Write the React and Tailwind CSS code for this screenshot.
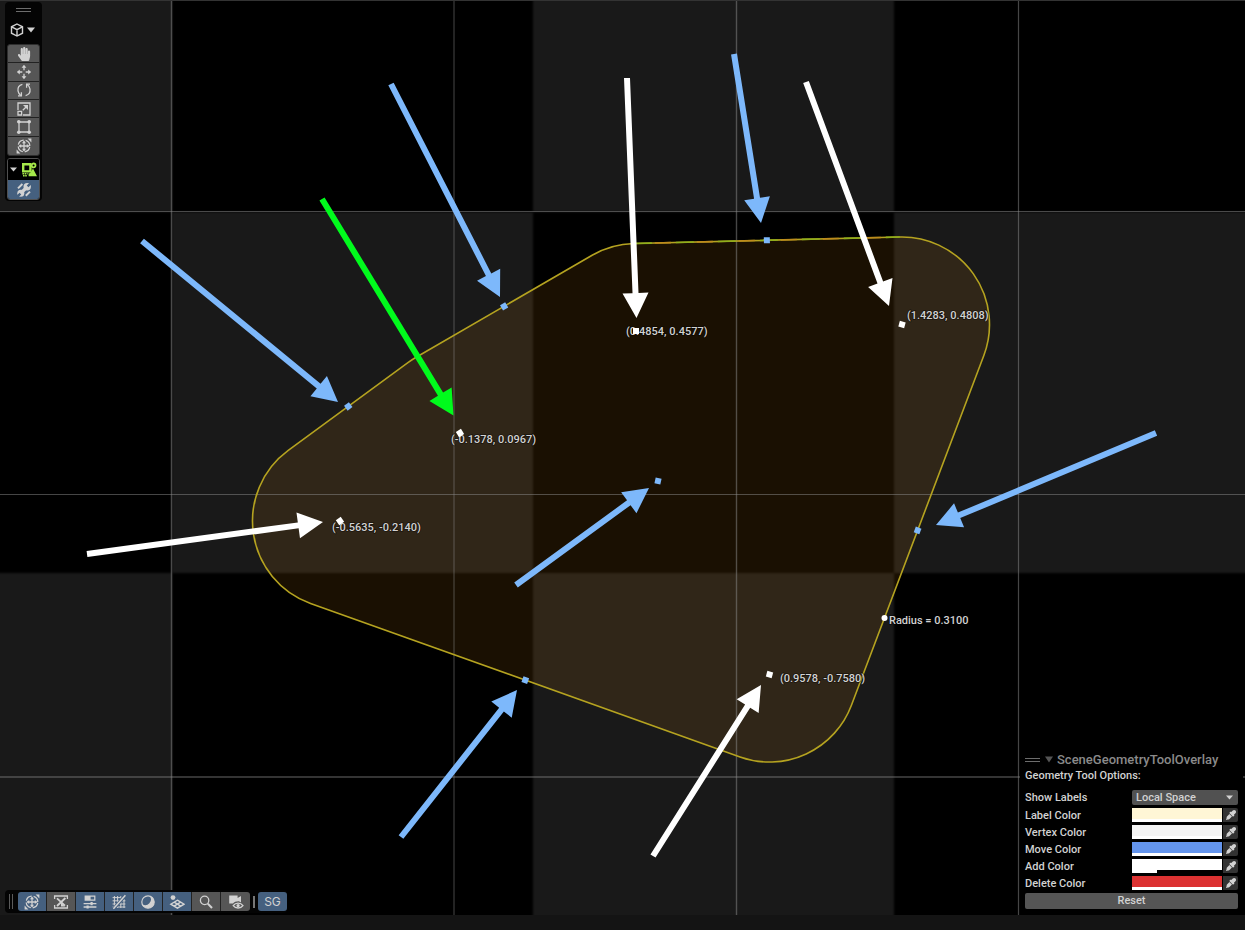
import React from "react";
import { FaEyeDropper, FaHandPaper } from "react-icons/fa";

const RADIUS = 87.5;
const VERTICES = [
  { x: 340, y: 521, label: "(-0.5635, -0.2140)", lx: 332, ly: 531, angle: 55 },
  { x: 460, y: 433, label: "(-0.1378, 0.0967)", lx: 451, ly: 443, angle: 58 },
  { x: 636, y: 331, label: "(0.4854, 0.4577)", lx: 626, ly: 335, angle: 0 },
  { x: 902, y: 324.5, label: "(1.4283, 0.4808)", lx: 907, ly: 319, angle: 15 },
  { x: 769.5, y: 674.5, label: "(0.9578, -0.7580)", lx: 780, ly: 682, angle: 15 },
];

const EDGES = VERTICES.map((a, i) => {
  const b = VERTICES[(i + 1) % VERTICES.length];
  const len = Math.hypot(b.x - a.x, b.y - a.y);
  const nx = ((b.y - a.y) / len) * RADIUS;
  const ny = (-(b.x - a.x) / len) * RADIUS;
  return {
    x1: a.x + nx,
    y1: a.y + ny,
    x2: b.x + nx,
    y2: b.y + ny,
    angle: (Math.atan2(b.y - a.y, b.x - a.x) * 180) / Math.PI,
  };
});

const OUTLINE =
  EDGES.map((e, i) =>
    i === 0
      ? `M${e.x1} ${e.y1}L${e.x2} ${e.y2}`
      : `A${RADIUS} ${RADIUS} 0 0 1 ${e.x1} ${e.y1}L${e.x2} ${e.y2}`
  ).join("") + `A${RADIUS} ${RADIUS} 0 0 1 ${EDGES[0].x1} ${EDGES[0].y1}Z`;

const BLUE = "#7db8fb";
const ARROWS = [
  [142, 241, 338, 402, BLUE],
  [391, 84, 500, 297, BLUE],
  [734, 54, 761, 223, BLUE],
  [1156, 433, 936, 525, BLUE],
  [516, 585, 649, 488, BLUE],
  [401, 837, 517, 690, BLUE],
  [627, 78, 636.5, 318, "#ffffff"],
  [806, 82, 889, 306, "#ffffff"],
  [87, 554, 323, 522, "#ffffff"],
  [653, 856, 761, 685, "#ffffff"],
  [322, 199, 453.5, 415.5, "#00fb1c"],
];

function Arrow({ x1, y1, x2, y2, color }) {
  const len = Math.hypot(x2 - x1, y2 - y1);
  const angle = (Math.atan2(y2 - y1, x2 - x1) * 180) / Math.PI;
  const neck = len - 25;
  return (
    <path
      transform={`translate(${x1} ${y1}) rotate(${angle})`}
      d={`M0 -3H${neck}V-13L${len} 0L${neck} 13V3H0Z`}
      fill={color}
    />
  );
}

function Scene() {
  return (
    <svg
      viewBox="0 0 1245 915"
      preserveAspectRatio="xMinYMin slice"
      className="absolute inset-0 h-full w-full"
      role="img"
      aria-label="Scene view"
    >
      <defs>
        <filter id="soft" x="-5%" y="-5%" width="110%" height="110%" colorInterpolationFilters="sRGB">
          <feGaussianBlur stdDeviation="1" />
        </filter>
      </defs>
      <rect width="1245" height="915" fill="#000" />
      <g fill="#191919" filter="url(#soft)">
        <rect x="-10" y="-10" width="182" height="222" />
        <rect x="533" y="-10" width="361" height="222" />
        <rect x="172" y="212" width="361" height="361" />
        <rect x="894" y="212" width="371" height="361" />
        <rect x="-10" y="573" width="182" height="362" />
        <rect x="533" y="573" width="361" height="362" />
      </g>
      <path d={OUTLINE} fill="#ff9e14" fillOpacity="0.1" />
      <g stroke="#8c8c8c" strokeOpacity="0.5">
        <line x1="171.5" x2="171.5" y1="0" y2="915" strokeWidth="1.5" />
        <line x1="454" x2="454" y1="0" y2="915" strokeWidth="1" />
        <line x1="736.5" x2="736.5" y1="0" y2="915" strokeWidth="1.4" />
        <line x1="1018.5" x2="1018.5" y1="0" y2="915" strokeWidth="1.2" />
        <line y1="211.5" y2="211.5" x1="0" x2="1245" strokeWidth="1.2" />
        <line y1="494.5" y2="494.5" x1="0" x2="1245" strokeWidth="1" />
        <line y1="777" y2="777" x1="0" x2="1245" strokeWidth="1.4" />
      </g>
      <rect width="1245" height="1" fill="#333" />
      <path d={OUTLINE} fill="none" stroke="#b5a320" strokeWidth="1.6" />
      <line
        x1={EDGES[2].x1}
        y1={EDGES[2].y1}
        x2={EDGES[2].x2}
        y2={EDGES[2].y2}
        stroke="#8fae1c"
        strokeWidth="1.6"
        strokeDasharray="18 24"
      />
      <line
        x1={EDGES[2].x1}
        y1={EDGES[2].y1}
        x2={EDGES[2].x2}
        y2={EDGES[2].y2}
        stroke="#bd8a1c"
        strokeWidth="1.6"
        strokeDasharray="16 26"
        strokeDashoffset="-21"
      />
      {EDGES.map((e, i) => (
        <rect
          key={i}
          x="-3"
          y="-3"
          width="6"
          height="6"
          fill={BLUE}
          transform={`translate(${(e.x1 + e.x2) / 2} ${(e.y1 + e.y2) / 2}) rotate(${e.angle})`}
        />
      ))}
      <rect x="-3" y="-3" width="6" height="6" fill={BLUE} transform="translate(658 481) rotate(12)" />
      <g
        fill="#d2d2d2"
        stroke="#000"
        strokeOpacity="0.5"
        strokeWidth="1.5"
        paintOrder="stroke"
        className="font-['Roboto',sans-serif] text-[11px] font-medium"
      >
        {VERTICES.map((v) => (
          <text key={v.label} x={v.lx} y={v.ly}>
            {v.label}
          </text>
        ))}
        <text x="889" y="624">
          Radius = 0.3100
        </text>
      </g>
      {VERTICES.map((v) => (
        <rect
          key={v.label}
          x="-3"
          y="-3"
          width="6"
          height="6"
          fill="#fff"
          transform={`translate(${v.x} ${v.y}) rotate(${v.angle})`}
        />
      ))}
      <circle cx="884.5" cy="618" r="3" fill="#fff" />
      {ARROWS.map(([x1, y1, x2, y2, color]) => (
        <Arrow key={`${x1}-${y1}`} x1={x1} y1={y1} x2={x2} y2={y2} color={color} />
      ))}
    </svg>
  );
}

function Icon({ children }) {
  return (
    <svg viewBox="0 0 16 16" className="size-4 shrink-0" fill="none" stroke="currentColor" strokeWidth="1.3" aria-hidden="true">
      {children}
    </svg>
  );
}

const CubeIcon = () => (
  <Icon>
    <path d="M8 2L13.5 4.8V11.2L8 14L2.5 11.2V4.8ZM2.7 4.8L8 7.7L13.3 4.8M8 7.7V14" strokeWidth="1.4" />
  </Icon>
);

const MoveIcon = () => (
  <Icon>
    <path d="M8 2V6.3M8 9.7V14M2 8H6.3M9.7 8H14" />
    <path d="M8 .8L10.4 3.8H5.6ZM8 15.2L10.4 12.2H5.6ZM.8 8L3.8 5.6V10.4ZM15.2 8L12.2 5.6V10.4Z" fill="currentColor" stroke="none" />
  </Icon>
);

const RotateIcon = () => (
  <Icon>
    <path d="M6.4 2.4C3.3 3.2 1.6 5.8 2 8.8C2.3 10.8 3.2 12.2 4.8 13.4M9.6 13.6C12.7 12.8 14.4 10.2 14 7.2C13.7 5.2 12.8 3.8 11.2 2.6" strokeWidth="1.3" />
    <path d="M2 13.8H5.4V10.2M14 2.2H10.6V5.8" />
  </Icon>
);

const ScaleIcon = () => (
  <Icon>
    <path d="M2 9V2H14V14H7M2 10.4H5.6V14H2ZM6.8 9.2L10.8 5.2" />
    <path d="M7 4H12V9Z" fill="currentColor" stroke="none" />
  </Icon>
);

const RectIcon = () => (
  <Icon>
    <path d="M3 3H13V13H3Z" />
    <g fill="currentColor" stroke="none">
      <circle cx="2.8" cy="2.8" r="1.8" />
      <circle cx="13.2" cy="2.8" r="1.8" />
      <circle cx="2.8" cy="13.2" r="1.8" />
      <circle cx="13.2" cy="13.2" r="1.8" />
    </g>
  </Icon>
);

const TransformIcon = () => (
  <Icon>
    <circle cx="8" cy="8" r="5.8" strokeWidth="1.3" strokeDasharray="7.1 2.01" strokeDashoffset="-1" />
    <path d="M8 3.5V12.5M3.5 8H12.5" />
    <path d="M8 2.6L10 5.2H6ZM8 13.4L10 10.8H6ZM2.6 8L5.2 6V10ZM13.4 8L10.8 6V10ZM11.6 .6H15.4V4.4ZM4.4 15.4H.6V11.6Z" fill="currentColor" stroke="none" />
  </Icon>
);

const ShapesIcon = () => (
  <Icon>
    <path d="M2.2 2.2H9.4V9.4H2.2Z" strokeWidth="2.4" />
    <circle cx="12.6" cy="3.4" r="1.9" strokeWidth="1.8" />
    <path d="M12 6.4L16 14.2H7.6V11.2H9Z" fill="currentColor" stroke="none" />
    <path d="M1.4 11.8H6.6M2 13.8H6" strokeWidth="1.4" strokeDasharray="1.6 .6" />
  </Icon>
);

const ToolIcon = () => (
  <Icon>
    <path d="M4.5 11.5L11.5 4.5" strokeWidth="3.2" />
    <circle cx="11.2" cy="4.8" r="3.7" fill="currentColor" stroke="none" />
    <circle cx="4.8" cy="11.2" r="3.5" fill="currentColor" stroke="none" />
    <path d="M11.6 4.4L15.4 .6M4.4 11.6L.6 15.4" stroke="#45607f" strokeWidth="2.4" />
    <path d="M2 6.4L6.4 2M9.8 13.8L14 9.6" strokeWidth="2" />
  </Icon>
);

const HourglassIcon = () => (
  <Icon>
    <path d="M1.6 5V2H14.4V5M1.6 11V14H14.4V11" />
    <path d="M4 4.4L12 11.6M12.4 4L4 12" strokeWidth="1.8" />
    <path d="M8 8.4L12 12.6H8Z" fill="currentColor" stroke="none" />
  </Icon>
);

const SlidersIcon = () => (
  <Icon>
    <path d="M2.6 1.6H13.4V6.8H2.6Z" fill="currentColor" stroke="none" />
    <path d="M8.6 2.8H12.2V5.6H8.6Z" fill="#45607f" stroke="none" />
    <path d="M1.6 9.6H14.4M1.6 13H14.4" strokeWidth="1.4" />
    <path d="M9.6 8V11.2M5.6 11.4V14.6" strokeWidth="2.2" />
  </Icon>
);

const GridSnapIcon = () => (
  <Icon>
    <path d="M3.4 2V14M6.6 2V14M9.8 2V14M13 5V14M1.6 3.6H11M1.6 6.8H14.4M1.6 10H14.4M1.6 13H14.4" strokeWidth="1" />
    <path d="M14.5 1L2.5 15" stroke="#45607f" strokeWidth="3.4" />
    <path d="M14.4 1.2L2.4 14.8" strokeWidth="1.5" />
  </Icon>
);

const MoonIcon = () => (
  <Icon>
    <circle cx="8" cy="8" r="6.2" strokeWidth="1.2" />
    <path d="M9.6 2A6.2 6.2 0 1 1 2.2 10.2A5.6 5.6 0 0 0 9.6 2Z" fill="currentColor" stroke="none" />
  </Icon>
);

const GizmoGridIcon = () => (
  <Icon>
    <circle cx="4" cy="3.6" r="2.4" fill="currentColor" stroke="none" />
    <path d="M8.4 6.2L15 10.2L8.4 14.2L1.8 10.2ZM5.1 8.2L11.7 12.2M11.7 8.2L5.1 12.2" strokeWidth="1.4" />
  </Icon>
);

const SearchIcon = () => (
  <Icon>
    <circle cx="6.6" cy="6.4" r="4.2" />
    <path d="M9.8 9.6L14 14" strokeWidth="2" />
  </Icon>
);

const CameraIcon = () => (
  <Icon>
    <path d="M1.2 1.6H9.6V4L13 2V8.4L11.4 7.4C8.2 7.2 6.4 8 5 9.6H1.2Z" fill="currentColor" stroke="none" />
    <path d="M5.2 11.6C7.6 8.4 12.6 8.4 15 11.6C12.6 14.8 7.6 14.8 5.2 11.6Z" />
    <circle cx="10.1" cy="11.6" r="1.6" fill="currentColor" stroke="none" />
  </Icon>
);

const Caret = ({ className }) => (
  <svg viewBox="0 0 8 6" className={className} fill="currentColor" preserveAspectRatio="none" aria-hidden="true">
    <path d="M0 .5H8L4 5.5Z" />
  </svg>
);

const HandIcon = () => <FaHandPaper className="h-[14px] w-[14px]" />;

const TOOLS = [
  ["View", HandIcon],
  ["Move", MoveIcon],
  ["Rotate", RotateIcon],
  ["Scale", ScaleIcon],
  ["Rect", RectIcon],
  ["Transform", TransformIcon],
];

function ToolsOverlay() {
  return (
    <aside aria-label="Tools" className="absolute left-[5px] top-[2px] flex w-[37px] flex-col rounded-sm bg-[#040404] px-[2px] pb-px text-[#d2d2d2]">
      <div className="mx-auto mt-[6px] h-[4px] w-[15px] border-y border-[#6d6d6d]" />
      <button type="button" aria-label="Pivot" className="mt-[9px] flex h-[18px] items-center gap-[2px] pl-[2px]">
        <CubeIcon />
        <Caret className="h-[6px] w-2" />
      </button>
      <div className="mt-[5px] grid h-[112px] grid-rows-6 divide-y divide-[#222] overflow-hidden rounded-[3px] border border-[#2e2e2e] bg-[#565656]">
        {TOOLS.map(([name, Glyph]) => (
          <button key={name} type="button" aria-label={name} className="flex min-h-0 items-center justify-center">
            <Glyph />
          </button>
        ))}
      </div>
      <div className="mt-[2px] overflow-hidden rounded-[3px] border border-[#505050]">
        <button type="button" aria-label="Geometry tools" className="flex h-[21px] w-full items-center justify-center gap-[4px] bg-black">
          <Caret className="h-[5px] w-[7px]" />
          <span className="flex text-[#a5e84a]">
            <ShapesIcon />
          </span>
        </button>
        <button type="button" aria-label="Edit geometry" className="flex h-[19px] w-full items-center justify-center bg-[#45607f]">
          <ToolIcon />
        </button>
      </div>
    </aside>
  );
}

const VIEW_TOGGLES = [
  ["Gizmo orientation", TransformIcon, true],
  ["Snapping", HourglassIcon, false],
  ["View options", SlidersIcon, true],
  ["Grid snapping", GridSnapIcon, true],
  ["Lighting", MoonIcon, true],
  ["Gizmos", GizmoGridIcon, true],
  ["Search", SearchIcon, false],
  ["Scene camera", CameraIcon, false],
];

function ViewBar() {
  return (
    <div role="toolbar" aria-label="View options" className="absolute bottom-[2px] left-[5px] flex h-[23px] items-center rounded-sm bg-[#040404] pl-[4px] text-[#d2d2d2]">
      <div className="mr-[5px] h-[15px] w-[4px] border-x border-[#5a5a5a]" />
      <div className="flex h-[19px] divide-x divide-[#222] overflow-hidden rounded-[3px]">
        {VIEW_TOGGLES.map(([name, Glyph, on]) => (
          <button
            key={name}
            type="button"
            aria-label={name}
            aria-pressed={on}
            className={`flex w-[29px] items-center justify-center ${on ? "bg-[#45607f]" : "bg-[#565656]"}`}
          >
            <Glyph />
          </button>
        ))}
      </div>
      <div className="mx-[3px] h-[12px] w-[2px] bg-[#777]" />
      <button type="button" className="h-[19px] w-[29px] rounded-[3px] bg-[#45607f] text-[12px] leading-[19px]">
        SG
      </button>
    </div>
  );
}

const COLORS = [
  ["Label Color", "#fff6d6", "w-full"],
  ["Vertex Color", "#f4f4f4", "w-full"],
  ["Move Color", "#6495ed", "w-full"],
  ["Add Color", "#ffffff", "w-[25px]"],
  ["Delete Color", "#dc3232", "w-full"],
];

function OptionsOverlay() {
  return (
    <section aria-label="Scene geometry options" className="absolute bottom-[4px] right-[2px] w-[223px] bg-black px-[5px] pb-[2px] font-['Roboto',sans-serif] text-[11px] font-medium text-[#d2d2d2]">
      <header className="flex h-[17px] items-center text-[13px] leading-[17px] text-[#8a8a8a]">
        <span className="h-[4px] w-[15px] border-y border-[#6d6d6d]" />
        <Caret className="ml-[5px] mr-[4px] h-[7px] w-2 text-[#555]" />
        <h2>SceneGeometryToolOverlay</h2>
      </header>
      <h3 className="h-[15px] leading-[15px]">Geometry Tool Options:</h3>
      <div className="mt-[7px] flex h-[18px] items-start">
        <label htmlFor="show-labels" className="w-[107px] leading-[15px]">
          Show Labels
        </label>
        <div className="relative flex-1">
          <select
            id="show-labels"
            className="block h-[15px] w-full appearance-none rounded-[2px] bg-[#515151] pl-[4px] leading-[15px] outline-none"
          >
            <option>Local Space</option>
            <option>World Space</option>
          </select>
          <Caret className="pointer-events-none absolute right-[5px] top-[5px] h-[5px] w-[7px]" />
        </div>
      </div>
      {COLORS.map(([name, color, alpha]) => {
        const id = name.toLowerCase().replace(" ", "-");
        return (
          <div key={name} className="flex h-[17px] items-start">
            <label htmlFor={id} className="w-[107px] leading-[15px]">
              {name}
            </label>
            <div className="flex flex-1 flex-col overflow-hidden">
              <input
                id={id}
                type="color"
                defaultValue={color}
                className="block h-[11px] w-full appearance-none border-0 bg-transparent p-0 [&::-webkit-color-swatch-wrapper]:p-0 [&::-webkit-color-swatch]:rounded-none [&::-webkit-color-swatch]:border-0"
              />
              <span className="block h-[3px] bg-black">
                <span className={`block h-full bg-white ${alpha}`} />
              </span>
            </div>
            <button type="button" aria-label={`Pick ${name}`} className="ml-px flex h-[14px] w-[15px] items-center justify-center rounded-r-[2px] bg-[#333]">
              <FaEyeDropper className="size-[10px]" />
            </button>
          </div>
        );
      })}
      <button type="button" className="block h-[16px] w-full rounded-[2px] bg-[#555] leading-[16px]">
        Reset
      </button>
    </section>
  );
}

export default function App() {
  return (
    <div className="flex min-h-screen flex-col bg-[#141414] font-['Inter','Liberation_Sans',sans-serif]">
      <main className="relative flex-1 overflow-hidden">
        <Scene />
        <ToolsOverlay />
        <ViewBar />
        <OptionsOverlay />
      </main>
      <footer className="h-[15px] bg-[#141414]" />
    </div>
  );
}
